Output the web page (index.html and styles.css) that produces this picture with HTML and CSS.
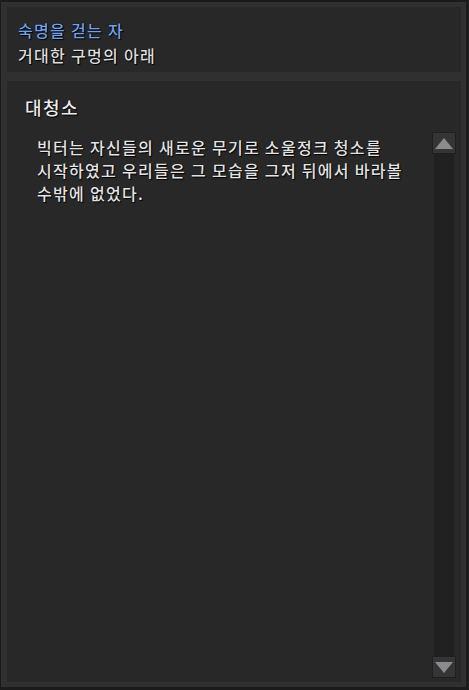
FILE: index.html
```html
<!DOCTYPE html>
<html>
  <head>
    <meta http-equiv="Content-Type" content="text/html; charset=utf-8" />
    <title>대청소</title>
    <link rel="stylesheet" href="styles.css">
  </head>
  <body>
    <div class="frame">
      <header class="quest-header">
        <div class="quest-name">숙명을 걷는 자</div>
        <div class="quest-place">거대한 구멍의 아래</div>
      </header>
      <section class="quest-body">
        <h2 class="quest-title">대청소</h2>
        <div class="quest-scroll">
          <p class="quest-text">
            빅터는 자신들의 새로운 무기로 소울정크 청소를 시작하였고 우리들은 그 모습을 그저 뒤에서 바라볼 수밖에 없었다.
          </p>
          <div class="scrollbar">
            <div class="scroll-btn">
              <svg width="18" height="11" viewBox="0 0 18 11"><polygon points="9,0 18,11 0,11" fill="#8b8b8d" /></svg>
            </div>
            <div class="scroll-track"></div>
            <div class="scroll-btn">
              <svg width="18" height="11" viewBox="0 0 18 11"><polygon points="0,0 18,0 9,11" fill="#8b8b8d" /></svg>
            </div>
          </div>
        </div>
      </section>
    </div>
  </body>
</html>
```
FILE: styles.css
```css
* {
  font-family: "Noto Sans CJK KR", "Noto Sans", sans-serif;
  box-sizing: border-box;
}
html,
body {
  margin: 0;
  padding: 0;
  background: #1b1b1b;
}
.frame {
  width: 469px;
  height: 690px;
  border-style: solid;
  border-color: #1b1b1b;
  border-width: 2px 3px 3px 1px;
  padding: 5px 5px 5px 6px;
  background: #303030;
  display: flex;
  flex-direction: column;
  gap: 9px;
}
.quest-header {
  height: 65px;
  background: #282828;
  padding: 11px 0 0 11px;
  font-size: 16px;
  font-weight: 500;
  line-height: 25px;
  letter-spacing: 1.3px;
  text-shadow: 1px 1px 1px #000, 0 0 1px #000;
}
.quest-name {
  color: #72a3ea;
}
.quest-place {
  color: #dcdcdc;
}
.quest-body {
  flex: 1;
  background: #282828;
  display: flex;
  flex-direction: column;
}
.quest-title {
  margin: 0;
  padding: 14px 0 0 18px;
  font-size: 18px;
  font-weight: 500;
  line-height: 24px;
  letter-spacing: 1.4px;
  color: #ececec;
  text-shadow: 1px 1px 1px #000, 0 0 1px #000;
}
.quest-scroll {
  flex: 1;
  display: flex;
  margin-top: 13px;
  padding: 0 5px 4px 0;
}
.quest-text {
  flex: 1;
  margin: 0;
  padding: 4px 10px 0 30px;
  font-size: 16px;
  font-weight: 500;
  line-height: 23px;
  letter-spacing: 1.3px;
  word-break: keep-all;
  color: #e4e4e4;
  text-shadow: 1px 1px 1px #000, 0 0 1px #000;
}
.scrollbar {
  width: 24px;
  display: flex;
  flex-direction: column;
}
.scroll-btn {
  height: 22px;
  background: #353535;
  border: 1px solid #1f1f1f;
  display: flex;
  align-items: center;
  justify-content: center;
}
.scroll-track {
  flex: 1;
  margin: 0 2px;
  background: #212121;
}
```
